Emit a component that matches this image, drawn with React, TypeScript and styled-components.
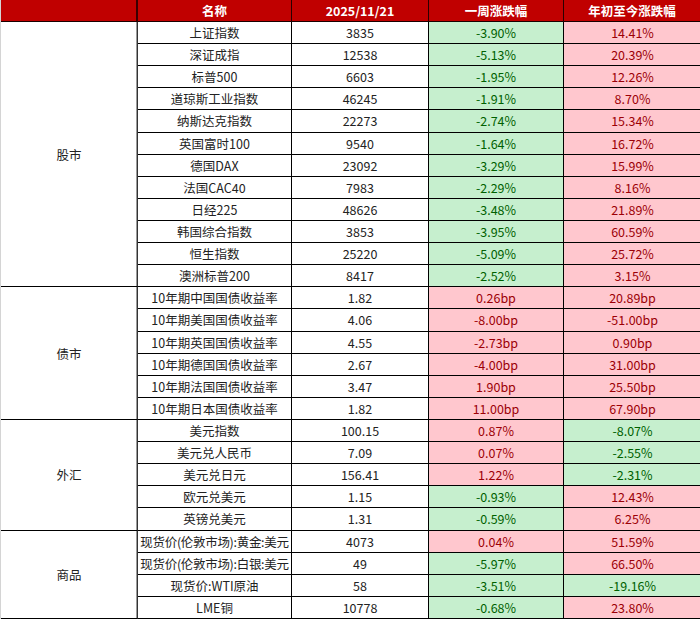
import React from "react";
import styled, { createGlobalStyle } from "styled-components";

const Global = createGlobalStyle`
  html, body { margin: 0; padding: 0; background: #fff; }
  body { font-family: "Noto Sans CJK SC", "Noto Sans", sans-serif; }
`;

type Tone = "plain" | "up" | "down";

type Row = { name: string; value: string; week: string; weekTone: Tone; ytd: string; ytdTone: Tone; compact?: boolean };
type Group = { title: string; rows: Row[] };

const g = (name: string, value: string, week: string, ytd: string): Row => ({
  name,
  value,
  week,
  weekTone: "down",
  ytd,
  ytdTone: "up",
});

const groups: Group[] = [
  {
    title: "股市",
    rows: [
      g("上证指数", "3835", "-3.90%", "14.41%"),
      g("深证成指", "12538", "-5.13%", "20.39%"),
      g("标普500", "6603", "-1.95%", "12.26%"),
      g("道琼斯工业指数", "46245", "-1.91%", "8.70%"),
      g("纳斯达克指数", "22273", "-2.74%", "15.34%"),
      g("英国富时100", "9540", "-1.64%", "16.72%"),
      g("德国DAX", "23092", "-3.29%", "15.99%"),
      g("法国CAC40", "7983", "-2.29%", "8.16%"),
      g("日经225", "48626", "-3.48%", "21.89%"),
      g("韩国综合指数", "3853", "-3.95%", "60.59%"),
      g("恒生指数", "25220", "-5.09%", "25.72%"),
      g("澳洲标普200", "8417", "-2.52%", "3.15%"),
    ],
  },
  {
    title: "债市",
    rows: [
      { name: "10年期中国国债收益率", value: "1.82", week: "0.26bp", weekTone: "up", ytd: "20.89bp", ytdTone: "up" },
      { name: "10年期美国国债收益率", value: "4.06", week: "-8.00bp", weekTone: "up", ytd: "-51.00bp", ytdTone: "up" },
      { name: "10年期英国国债收益率", value: "4.55", week: "-2.73bp", weekTone: "up", ytd: "0.90bp", ytdTone: "up" },
      { name: "10年期德国国债收益率", value: "2.67", week: "-4.00bp", weekTone: "up", ytd: "31.00bp", ytdTone: "up" },
      { name: "10年期法国国债收益率", value: "3.47", week: "1.90bp", weekTone: "up", ytd: "25.50bp", ytdTone: "up" },
      { name: "10年期日本国债收益率", value: "1.82", week: "11.00bp", weekTone: "up", ytd: "67.90bp", ytdTone: "up" },
    ],
  },
  {
    title: "外汇",
    rows: [
      { name: "美元指数", value: "100.15", week: "0.87%", weekTone: "up", ytd: "-8.07%", ytdTone: "down" },
      { name: "美元兑人民币", value: "7.09", week: "0.07%", weekTone: "up", ytd: "-2.55%", ytdTone: "down" },
      { name: "美元兑日元", value: "156.41", week: "1.22%", weekTone: "up", ytd: "-2.31%", ytdTone: "down" },
      { name: "欧元兑美元", value: "1.15", week: "-0.93%", weekTone: "down", ytd: "12.43%", ytdTone: "up" },
      { name: "英镑兑美元", value: "1.31", week: "-0.59%", weekTone: "down", ytd: "6.25%", ytdTone: "up" },
    ],
  },
  {
    title: "商品",
    rows: [
      { name: "现货价(伦敦市场):黄金:美元", value: "4073", week: "0.04%", weekTone: "up", ytd: "51.59%", ytdTone: "up", compact: true },
      { name: "现货价(伦敦市场):白银:美元", value: "49", week: "-5.97%", weekTone: "down", ytd: "66.50%", ytdTone: "up", compact: true },
      { name: "现货价:WTI原油", value: "58", week: "-3.51%", weekTone: "down", ytd: "-19.16%", ytdTone: "down" },
      { name: "LME铜", value: "10778", week: "-0.68%", weekTone: "down", ytd: "23.80%", ytdTone: "up" },
    ],
  },
];

const totalRows = groups.reduce((n, gr) => n + gr.rows.length, 0);

const Table = styled.div<{ $rows: number }>`
  display: grid;
  grid-template-columns: 137px 154px 137px 135px 137px;
  grid-template-rows: 22px repeat(${(p) => p.$rows}, 1fr);
  width: 700px;
  height: 619px;
  font-size: 12.5px;
  color: #222;
  border-left: 1px solid #d4d4d4;
  box-sizing: border-box;
`;

const HeaderCell = styled.div<{ $first?: boolean }>`
  background: #c00000;
  color: #fff;
  font-weight: 700;
  display: flex;
  align-items: center;
  justify-content: center;
  border-bottom: 1px solid #1a0000;
  border-right: ${(p) => (p.$first ? "2px solid #3a0000" : "1px solid #2a0000")};
  box-sizing: border-box;
  white-space: nowrap;
  &:last-child { border-right: none; }
`;

const CategoryCell = styled.div<{ $span: number }>`
  grid-column: 1;
  grid-row: span ${(p) => p.$span};
  display: flex;
  align-items: center;
  justify-content: center;
  border-bottom: 1px solid #000;
  border-right: 1px solid #333;
  box-shadow: inset -1px 0 0 #9a9a9a;
  box-sizing: border-box;
  background: #fff;
`;

const toneBg: Record<Tone, string> = { plain: "#fff", up: "#ffc7ce", down: "#c6efce" };
const toneFg: Record<Tone, string> = { plain: "#222", up: "#9c0006", down: "#006100" };

const Cell = styled.div<{ $tone?: Tone; $groupEnd?: boolean; $compact?: boolean; $last?: boolean }>`
  display: flex;
  align-items: center;
  justify-content: center;
  white-space: nowrap;
  overflow: hidden;
  background: ${(p) => toneBg[p.$tone ?? "plain"]};
  color: ${(p) => toneFg[p.$tone ?? "plain"]};
  border-bottom: 1px solid #000;
  border-right: ${(p) => (p.$last ? "none" : "1px solid #000")};
  letter-spacing: ${(p) => (p.$compact ? "-0.3px" : "0")};
  box-sizing: border-box;
`;

export default function App() {
  return (
    <>
      <Global />
      <Table $rows={totalRows}>
        <HeaderCell $first></HeaderCell>
        <HeaderCell>名称</HeaderCell>
        <HeaderCell>2025/11/21</HeaderCell>
        <HeaderCell>一周涨跌幅</HeaderCell>
        <HeaderCell>年初至今涨跌幅</HeaderCell>
        {groups.map((gr) =>
          gr.rows.map((r, i) => (
            <React.Fragment key={gr.title + r.name}>
              {i === 0 && <CategoryCell $span={gr.rows.length}>{gr.title}</CategoryCell>}
              <Cell $compact={r.compact}>{r.name}</Cell>
              <Cell>{r.value}</Cell>
              <Cell $tone={r.weekTone}>{r.week}</Cell>
              <Cell $tone={r.ytdTone} $last>{r.ytd}</Cell>
            </React.Fragment>
          ))
        )}
      </Table>
    </>
  );
}
